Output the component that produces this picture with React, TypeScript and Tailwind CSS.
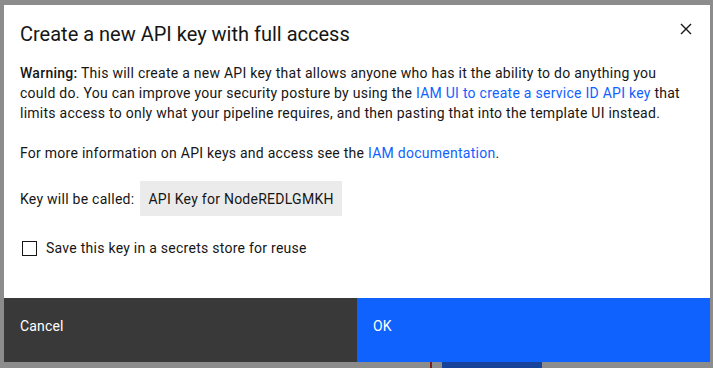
export default function App() {
  return (
    <div className="relative h-[368px] w-[713px] overflow-hidden bg-[#8c8c8c] font-['Roboto',sans-serif] text-[#161616]">
      {/* what peeks out below the overlay */}
      <div className="absolute left-[430px] top-[356px] h-[12px] w-[2px] bg-[#7a1f1f]" />
      <div className="absolute left-[442px] top-[356px] h-[12px] w-[100px] bg-[#17449a]" />

      <div className="absolute left-[4px] top-[5px] flex h-[357px] w-[706px] flex-col bg-white">
        <div className="relative px-4 pt-[15px]">
          <h2 className="text-[20px] leading-[28px] font-normal">Create a new API key with full access</h2>
          <button className="absolute right-[13px] top-[13px] flex h-[22px] w-[22px] items-center justify-center">
            <svg width="12" height="12" viewBox="0 0 12 12" fill="none" stroke="#161616" strokeWidth="1.4">
              <path d="M1 1 L11 11 M11 1 L1 11" />
            </svg>
          </button>
        </div>

        <div className="flex-1 px-4 pt-[15px] text-[14px] leading-[20px] tracking-[0.26px]">
          <p className="whitespace-nowrap">
            <strong className="font-medium">Warning:</strong> This will create a new API key that allows anyone who has it
            the ability to do anything you
            <br />
            could do. You can improve your security posture by using the{' '}
            <a className="text-[#0f62fe]">IAM UI to create a service ID API key</a> that
            <br />
            limits access to only what your pipeline requires, and then pasting that into the template UI instead.
          </p>
          <p className="mt-[20px]">
            For more information on API keys and access see the <a className="text-[#0f62fe]">IAM documentation</a>.
          </p>
          <div className="mt-[18px] flex items-center">
            <span>Key will be called:</span>
            <span className="ml-[6px] flex h-[35px] items-center bg-[#ebebeb] px-2">API Key for NodeREDLGMKH</span>
          </div>
          <label className="mt-[22px] flex items-center">
            <span className="ml-[2px] h-[15px] w-[15px] border border-[#161616] bg-white" />
            <span className="ml-[9px]">Save this key in a secrets store for reuse</span>
          </label>
        </div>

        <div className="flex h-[64px] text-[14px] tracking-[0.16px]">
          <button className="flex flex-1 items-start bg-[#393939] pl-4 pt-[19px] text-left leading-[18px] text-white">
            Cancel
          </button>
          <button className="flex flex-1 items-start bg-[#0f62fe] pl-4 pt-[19px] text-left leading-[18px] text-white">
            OK
          </button>
        </div>
      </div>
    </div>
  )
}
